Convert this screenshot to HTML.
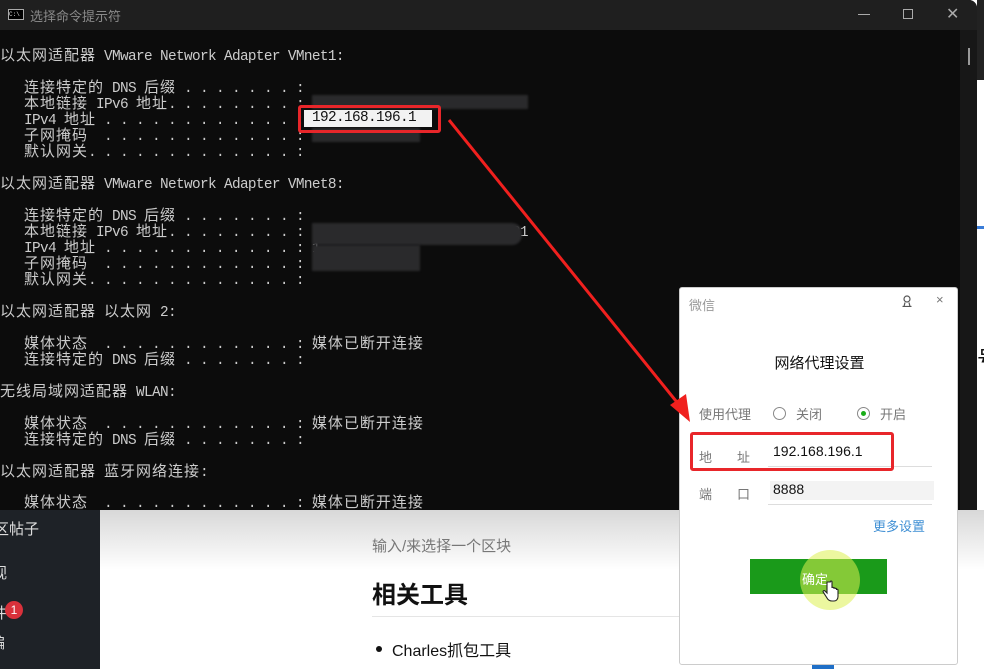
<!DOCTYPE html>
<html><head><meta charset="utf-8"><style>
*{margin:0;padding:0;box-sizing:border-box}
body{width:984px;height:669px;overflow:hidden;position:relative;background:#fff;font-family:"Liberation Sans","Noto Sans CJK SC",sans-serif}
.con{position:absolute;left:0;top:0;width:977px;height:510px;background:#0c0c0c;border-radius:0 8px 8px 0}
.tb{position:absolute;left:0;top:0;width:977px;height:30px;background:#1f1f1f;border-radius:0 8px 0 0}
.ln{position:absolute;left:0;height:16px;line-height:16px;white-space:pre;color:#cccccc;font-family:"Liberation Mono","Noto Sans CJK SC",monospace;font-size:14.4px;letter-spacing:-0.64px}
.ln i{font-style:normal;font-size:15px;letter-spacing:1px;font-family:"Noto Sans CJK SC",sans-serif}
.blur{position:absolute;background:#2a2a2c;filter:blur(1px)}
</style></head><body>
<div style="position:absolute;left:977px;top:0;width:7px;height:80px;background:#222"></div>
<div style="position:absolute;left:977px;top:226px;width:7px;height:3px;background:#3b7dd8"></div>
<div style="position:absolute;left:977px;top:350px;font-size:22px;color:#111;line-height:20px">号</div>
<div style="position:absolute;left:0;top:510px;width:100px;height:159px;background:#1e2227;color:#ddd;font-size:15px">
 <div style="position:absolute;left:-6px;top:8px">区帖子</div>
 <div style="position:absolute;left:-8px;top:52px">视</div>
 <div style="position:absolute;left:-8px;top:92px">件</div>
 <div style="position:absolute;left:5px;top:91px;width:18px;height:18px;border-radius:50%;background:#d9313b;color:#fff;font-size:12px;text-align:center;line-height:18px">1</div>
 <div style="position:absolute;left:-10px;top:122px">编</div>
</div>
<div style="position:absolute;left:100px;top:510px;width:884px;height:60px;background:linear-gradient(#d8d8d8,#fff)"></div>
<div style="position:absolute;left:372px;top:535px;font-size:15px;color:#777">输入/来选择一个区块</div>
<div style="position:absolute;left:372px;top:575px;font-size:24px;font-weight:bold;color:#111">相关工具</div>
<div style="position:absolute;left:372px;top:616px;width:320px;height:1px;background:#e5e5e5"></div>
<div style="position:absolute;left:376px;top:646px;width:6px;height:6px;border-radius:50%;background:#111"></div>
<div style="position:absolute;left:392px;top:637px;font-size:16px;color:#111">Charles抓包工具</div>
<div style="position:absolute;left:812px;top:662px;width:22px;height:7px;background:#1f6fc7"></div>

<div class="con">
<div class="tb">
 <div style="position:absolute;left:8px;top:9px;width:16px;height:11px;border:1px solid #aaa;background:#000;font-size:6px;color:#ddd;line-height:9px;font-family:'Liberation Mono',monospace">C:\</div>
 <div style="position:absolute;left:30px;top:6px;font-size:13px;color:#8a8a8a">选择命令提示符</div>
 <div style="position:absolute;left:858px;top:14px;width:12px;height:1px;background:#aaa"></div>
 <div style="position:absolute;left:903px;top:9px;width:10px;height:10px;border:1px solid #aaa"></div>
 <div style="position:absolute;left:946px;top:4px;color:#aaa;font-size:16px">✕</div>
</div>
<div style="position:absolute;left:960px;top:30px;width:17px;height:480px;background:#171717"></div>
<div style="position:absolute;left:968px;top:48px;width:2px;height:17px;background:#999"></div>

<div class="ln" style="top:47px"><i>以太网适配器</i> VMware Network Adapter VMnet1:</div>
<div class="ln" style="top:79px">   <i>连接特定的</i> DNS <i>后缀</i> . . . . . . . :</div>
<div class="ln" style="top:95px">   <i>本地链接</i> IPv6 <i>地址</i>. . . . . . . . :</div>
<div class="ln" style="top:111px">   IPv4 <i>地址</i> . . . . . . . . . . . . :</div>
<div class="ln" style="top:127px">   <i>子网掩码</i>  . . . . . . . . . . . . :</div>
<div class="ln" style="top:143px">   <i>默认网关</i>. . . . . . . . . . . . . :</div>
<div class="blur" style="left:312px;top:95px;width:216px;height:14px"></div>
<div class="blur" style="left:312px;top:128px;width:108px;height:14px"></div>
<div style="position:absolute;left:304px;top:110px;width:128px;height:17px;background:#f2f2f2;color:#111;font-family:'Liberation Mono',monospace;font-size:14.4px;letter-spacing:-0.64px;line-height:17px;padding-left:8px">192.168.196.1</div>

<div class="ln" style="top:175px"><i>以太网适配器</i> VMware Network Adapter VMnet8:</div>
<div class="ln" style="top:207px">   <i>连接特定的</i> DNS <i>后缀</i> . . . . . . . :</div>
<div class="ln" style="top:223px">   <i>本地链接</i> IPv6 <i>地址</i>. . . . . . . . :                         %21</div>
<div class="ln" style="top:239px">   IPv4 <i>地址</i> . . . . . . . . . . . . : 1</div>
<div class="ln" style="top:255px">   <i>子网掩码</i>  . . . . . . . . . . . . :</div>
<div class="ln" style="top:271px">   <i>默认网关</i>. . . . . . . . . . . . . :</div>
<div class="blur" style="left:312px;top:223px;width:210px;height:22px;border-radius:0 10px 10px 0"></div>
<div class="blur" style="left:312px;top:245px;width:108px;height:26px"></div>

<div class="ln" style="top:303px"><i>以太网适配器</i> <i>以太网</i> 2:</div>
<div class="ln" style="top:335px">   <i>媒体状态</i>  . . . . . . . . . . . . : <i>媒体已断开连接</i></div>
<div class="ln" style="top:351px">   <i>连接特定的</i> DNS <i>后缀</i> . . . . . . . :</div>
<div class="ln" style="top:383px"><i>无线局域网适配器</i> WLAN:</div>
<div class="ln" style="top:415px">   <i>媒体状态</i>  . . . . . . . . . . . . : <i>媒体已断开连接</i></div>
<div class="ln" style="top:431px">   <i>连接特定的</i> DNS <i>后缀</i> . . . . . . . :</div>
<div class="ln" style="top:463px"><i>以太网适配器</i> <i>蓝牙网络连接</i>:</div>
<div class="ln" style="top:494px">   <i>媒体状态</i>  . . . . . . . . . . . . : <i>媒体已断开连接</i></div>
</div>

<div style="position:absolute;left:298px;top:105px;width:143px;height:28px;border:3px solid #e8262a;border-radius:3px"></div>

<div style="position:absolute;left:679px;top:287px;width:279px;height:378px;background:#fff;border:1px solid #ccc;border-radius:3px">
 <div style="position:absolute;left:9px;top:7px;font-size:13px;color:#999">微信</div>
 <svg style="position:absolute;left:221px;top:7px" width="12" height="12" viewBox="0 0 12 12"><circle cx="6" cy="4" r="3" fill="none" stroke="#555" stroke-width="1.2"/><path d="M1.5 11.5h9M3 11.5l1-4M9 11.5l-1-4" stroke="#555" stroke-width="1.2" fill="none"/></svg>
 <div style="position:absolute;left:256px;top:4px;font-size:13px;color:#777">×</div>
 <div style="position:absolute;left:0;width:279px;top:64px;text-align:center;font-size:15px;color:#111">网络代理设置</div>
 <div style="position:absolute;left:19px;top:116px;font-size:13px;color:#777">使用代理</div>
 <div style="position:absolute;left:93px;top:119px;width:13px;height:13px;border:1px solid #888;border-radius:50%"></div>
 <div style="position:absolute;left:116px;top:116px;font-size:13px;color:#777">关闭</div>
 <div style="position:absolute;left:177px;top:119px;width:13px;height:13px;border:1px solid #888;border-radius:50%"><div style="position:absolute;left:3px;top:3px;width:5px;height:5px;border-radius:50%;background:#1aad19"></div></div>
 <div style="position:absolute;left:200px;top:116px;font-size:13px;color:#777">开启</div>
 <div style="position:absolute;left:19px;top:159px;font-size:13px;color:#777">地</div>
 <div style="position:absolute;left:57px;top:159px;font-size:13px;color:#777">址</div>
 <div style="position:absolute;left:93px;top:155px;font-size:14px;color:#111">192.168.196.1</div>
 <div style="position:absolute;left:88px;top:178px;width:164px;height:1px;background:#ddd"></div>
 <div style="position:absolute;left:19px;top:196px;font-size:13px;color:#777">端</div>
 <div style="position:absolute;left:57px;top:196px;font-size:13px;color:#777">口</div>
 <div style="position:absolute;left:90px;top:193px;width:164px;height:19px;background:#f3f3f3"></div>
 <div style="position:absolute;left:93px;top:193px;font-size:14px;color:#111">8888</div>
 <div style="position:absolute;left:88px;top:216px;width:164px;height:1px;background:#ddd"></div>
 <div style="position:absolute;left:193px;top:228px;font-size:13px;color:#3f8fd4">更多设置</div>
 <div style="position:absolute;left:70px;top:271px;width:137px;height:35px;background:#1a9a1a"></div>
 <div style="position:absolute;left:120px;top:262px;width:60px;height:60px;border-radius:50%;background:rgba(220,240,80,0.55)"></div>
 <div style="position:absolute;left:122px;top:281px;font-size:13px;color:#fff">确定</div>
 <svg style="position:absolute;left:142px;top:292px" width="18" height="22" viewBox="0 0 18 22"><path d="M5 2v11l-2-2c-1-1-2.5 0-1.7 1.2L5 18c1 2 2.5 3 5 3h2c2.5 0 4-2 4-4.5V10c0-1-1.5-1-1.5 0V9c0-1-1.5-1-1.5 0v-.5c0-1-1.5-1-1.5 0V8c0-1-1.5-1-1.5 0V2c0-1.3-1.8-1.3-1.8 0z" fill="#fff" stroke="#222" stroke-width="1.1"/></svg>
</div>
<div style="position:absolute;left:690px;top:432px;width:204px;height:39px;border:3px solid #e8262a;border-radius:3px"></div>

<svg style="position:absolute;left:0;top:0" width="984" height="669"><line x1="449" y1="120" x2="680" y2="406" stroke="#f0201e" stroke-width="3"/><polygon points="690,422 670,405 686,394" fill="#f0201e"/></svg>
</body></html>
